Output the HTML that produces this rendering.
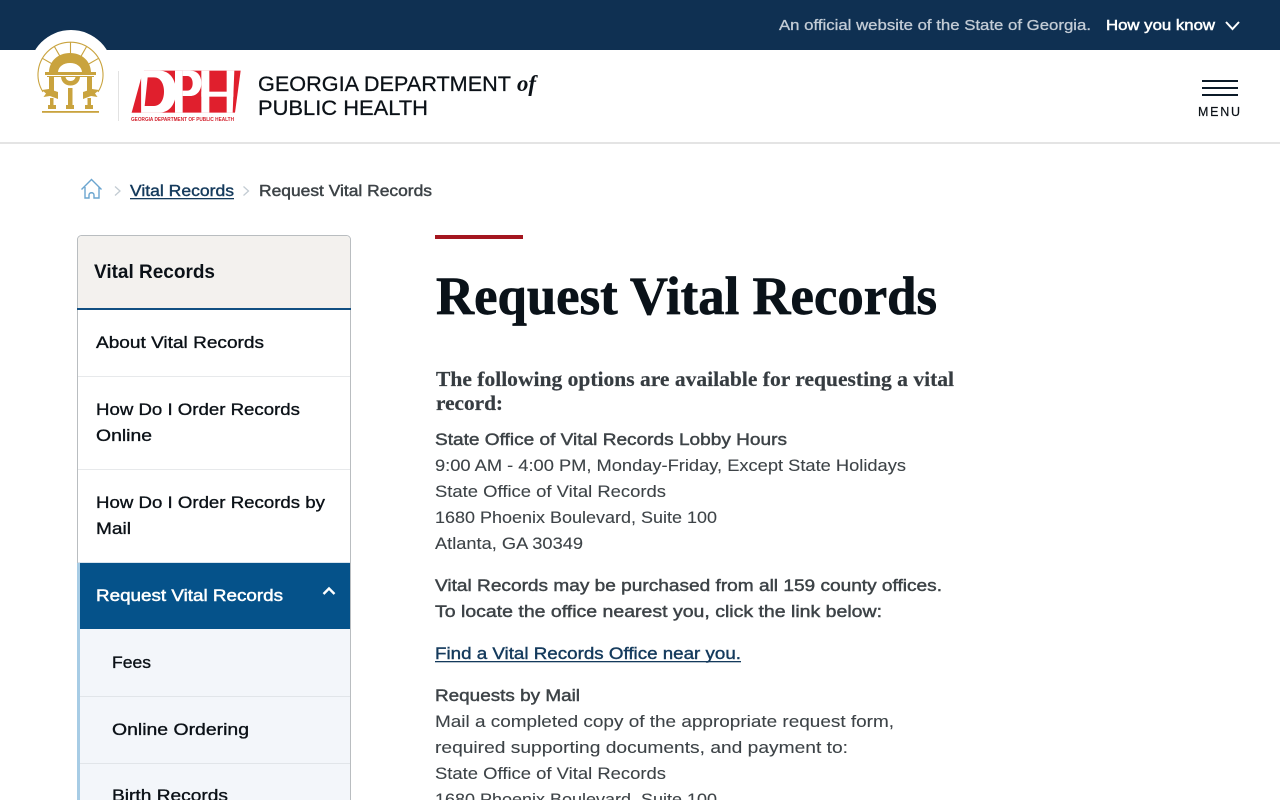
<!DOCTYPE html>
<html lang="en">
<head>
<meta charset="utf-8">
<title>Request Vital Records</title>
<style>
html,body{margin:0;padding:0;background:#fff;width:1280px;height:800px;overflow:hidden}
svg{display:block;position:absolute;left:0;top:0}
text{font-family:"Liberation Sans",sans-serif;font-size:17px;fill:#3d4347}
.r{stroke:#3d4347;stroke-width:.1}
.m{stroke:#3d4347;stroke-width:.45}
.n{fill:#0b1117;stroke:#0b1117;stroke-width:.35}
.f{font-family:"Liberation Serif",serif;font-weight:700}
</style>
</head>
<body>
<svg width="1280" height="800" viewBox="0 0 1280 800" xmlns="http://www.w3.org/2000/svg">
<!-- top bar -->
<rect width="1280" height="50" fill="#0f3052"/>
<rect y="50" width="1280" height="92" fill="#fff"/>
<rect y="142" width="1280" height="2" fill="#e4e4e4"/>
<text x="779" y="30" textLength="312" lengthAdjust="spacingAndGlyphs" style="font-size:15px;fill:#c3ccd6;stroke:#c3ccd6;stroke-width:.3">An official website of the State of Georgia.</text>
<text x="1106" y="30" textLength="109" lengthAdjust="spacingAndGlyphs" style="font-size:15px;fill:#fff;stroke:#fff;stroke-width:.5">How you know</text>
<path d="M1226 22L1232.500 29L1239 22" fill="none" stroke="#fff" stroke-width="2"/>

<!-- seal -->
<circle cx="71" cy="72" r="42" fill="#fff"/>
<g fill="#c9a33e" stroke="none">
<path d="M43 92A32.500 32.500 0 1 1 98 92" fill="none" stroke="#c9a33e" stroke-width="1.100"/>
<path d="M70.500 53V42M81 56.300L86.700 46.400M60 56.300L54.300 46.400M88.700 64L98.600 58.300M52.300 64L42.400 58.300" fill="none" stroke="#c9a33e" stroke-width="1.100"/>
<path d="M49 72C49.500 60.500 58.500 53 70 53C81.500 53 90.500 60.500 91 72H82C81.500 66.500 76.500 63 70 63C63.500 63 58.500 66.500 58 72Z"/>
<rect x="45" y="72" width="51" height="3"/>
<rect x="47" y="76" width="47" height="1"/>
<path d="M61 77H80C79.500 82 76 85.500 70.500 85.500C65 85.500 61.500 82 61 77ZM65.500 77C66 79.500 68 81 70.500 81C73 81 75 79.500 75.500 77Z" fill-rule="evenodd"/>
<rect x="49" y="77" width="5" height="15"/><rect x="87" y="77" width="5" height="15"/>
<rect x="68" y="88" width="4.500" height="17"/>
<rect x="50" y="98" width="3.500" height="7"/><rect x="87.500" y="98" width="3.500" height="7"/>
<path d="M42 90L49 89L58 92V99L50 96L43.500 97L46 93.500Z"/><path d="M99 90L92 89L83 92V99L91 96L97.500 97L95 93.500Z"/>
<rect x="48" y="105" width="8" height="4"/><rect x="66" y="105" width="8" height="4"/><rect x="85" y="105" width="8" height="4"/>
<rect x="42" y="111" width="57" height="1.800"/>
</g>
<rect x="118" y="71" width="1" height="50" fill="#e2e2e2"/>

<!-- DPH logo -->
<g transform="translate(0 20) scale(.33333)">
<path d="M395 278L432 152H722L705 278Z" fill="#e01f2d"/>
<path d="M425 152H478C510 152 528 180 528 215C528 250 510 278 478 278H425Z" fill="#fff"/>
<path d="M395 278L425 278V170L432 152H400Z" fill="#fff"/>
<path d="M395 278L423 176V278Z" fill="#e01f2d"/>
<path d="M443 172H462C482 172 492 192 492 215C492 238 482 258 462 258H434Z" fill="#e01f2d"/>
<rect x="525" y="152" width="23" height="126" fill="#fff"/>
<path d="M548 152H570C595 152 604 170 604 190C604 212 590 228 570 228H548Z" fill="#fff"/>
<path d="M548 168H562C572 168 578 178 578 190C578 202 572 212 562 212H548Z" fill="#e01f2d"/>
<rect x="604" y="152" width="24" height="126" fill="#fff"/>
<path d="M680 152H703L698 278H680Z" fill="#fff"/>
<rect x="604" y="215" width="96" height="15" fill="#fff"/>
</g>
<text x="131" y="121" textLength="103" lengthAdjust="spacingAndGlyphs" style="font-size:5.500px;font-weight:700;fill:#d3222e">GEORGIA DEPARTMENT OF PUBLIC HEALTH</text>

<!-- site name -->
<text x="258" y="91" textLength="253" lengthAdjust="spacingAndGlyphs" style="font-size:21px;fill:#0b1117;stroke:#0b1117;stroke-width:.25">GEORGIA DEPARTMENT</text>
<text x="517" y="91" textLength="19" lengthAdjust="spacingAndGlyphs" style="font-family:'Liberation Serif',serif;font-style:italic;font-weight:700;font-size:23px;fill:#0b1117">of</text>
<text x="258" y="115" textLength="170" lengthAdjust="spacingAndGlyphs" style="font-size:21px;fill:#0b1117;stroke:#0b1117;stroke-width:.25">PUBLIC HEALTH</text>

<!-- menu -->
<rect x="1202" y="80" width="36" height="2" fill="#0b1a28"/>
<rect x="1202" y="87" width="36" height="2" fill="#0b1a28"/>
<rect x="1202" y="94" width="36" height="2" fill="#0b1a28"/>
<text x="1198" y="116" textLength="42" lengthAdjust="spacing" style="font-size:12.500px;fill:#0b1117;stroke:#0b1117;stroke-width:.2">MENU</text>

<!-- breadcrumb -->
<path d="M81.500 189.500L91.500 179.500L101.500 189.500M85 187V198H89V195C89 192 94 192 94 195V198H99V187" fill="none" stroke="#6ba5cf" stroke-width="1.400"/>
<path d="M115 186.500L120 191L115 195.500" fill="none" stroke="#c3ccd3" stroke-width="1.300"/>
<text x="130" y="196" textLength="104" lengthAdjust="spacingAndGlyphs" style="font-size:16px;fill:#143a5c;stroke:#143a5c;stroke-width:.4">Vital Records</text>
<rect x="130" y="198" width="104" height="1.300" fill="#143a5c"/>
<path d="M243.500 186.500L248.500 191L243.500 195.500" fill="none" stroke="#c3ccd3" stroke-width="1.300"/>
<text class="m" x="259" y="196" textLength="173" lengthAdjust="spacingAndGlyphs" style="font-size:16px">Request Vital Records</text>

<!-- sidebar -->
<rect x="77.500" y="235.500" width="273" height="600" rx="4" fill="#fff" stroke="#b9bdc0"/>
<path d="M78 309V240A4 4 0 0 1 82 236H346A4 4 0 0 1 350 240V309Z" fill="#f3f1ee"/>
<rect x="77" y="308" width="274" height="2" fill="#114f82"/>
<text x="94" y="278" textLength="121" lengthAdjust="spacingAndGlyphs" style="font-size:19px;font-weight:700;fill:#0b1117">Vital Records</text>
<text class="n" x="96" y="348" textLength="168" lengthAdjust="spacingAndGlyphs">About Vital Records</text>
<rect x="78" y="376" width="272" height="1" fill="#e7e9eb"/>
<text class="n" x="96" y="415" textLength="204" lengthAdjust="spacingAndGlyphs">How Do I Order Records</text>
<text class="n" x="96" y="441" textLength="56" lengthAdjust="spacingAndGlyphs">Online</text>
<rect x="78" y="469" width="272" height="1" fill="#e7e9eb"/>
<text class="n" x="96" y="508" textLength="229" lengthAdjust="spacingAndGlyphs">How Do I Order Records by</text>
<text class="n" x="96" y="534" textLength="35" lengthAdjust="spacingAndGlyphs">Mail</text>
<rect x="78" y="562" width="272" height="1" fill="#d8e4ee"/>
<rect x="80" y="563" width="270" height="66" fill="#05528a"/>
<rect x="80" y="629" width="270" height="171" fill="#f3f6fa"/>
<rect x="77" y="563" width="3" height="237" fill="#a7cce5"/>
<text x="96" y="601" textLength="187" lengthAdjust="spacingAndGlyphs" style="fill:#fff;stroke:#fff;stroke-width:.5">Request Vital Records</text>
<path d="M323.500 594L329 588.500L334.500 594" fill="none" stroke="#fff" stroke-width="2.400"/>
<text class="n" x="112" y="668" textLength="39" lengthAdjust="spacingAndGlyphs">Fees</text>
<rect x="80" y="696" width="270" height="1" fill="#e1e5e9"/>
<text class="n" x="112" y="735" textLength="137" lengthAdjust="spacingAndGlyphs">Online Ordering</text>
<rect x="80" y="763" width="270" height="1" fill="#e1e5e9"/>
<text class="n" x="112" y="801" textLength="116" lengthAdjust="spacingAndGlyphs">Birth Records</text>

<!-- main -->
<rect x="435" y="235" width="88" height="4" fill="#a4161f"/>
<text class="f" x="436" y="314" textLength="501" lengthAdjust="spacingAndGlyphs" style="font-size:54px;fill:#0a1219;stroke:#0a1219;stroke-width:.7">Request Vital Records</text>
<text class="f" x="436" y="386" textLength="518" lengthAdjust="spacingAndGlyphs" style="font-size:21px;fill:#363c41;stroke:#363c41;stroke-width:.2">The following options are available for requesting a vital</text>
<text class="f" x="436" y="410" textLength="67" lengthAdjust="spacingAndGlyphs" style="font-size:21px;fill:#363c41;stroke:#363c41;stroke-width:.2">record:</text>

<text class="m" x="435" y="445" textLength="352" lengthAdjust="spacingAndGlyphs">State Office of Vital Records Lobby Hours</text>
<text class="r" x="435" y="471" textLength="471" lengthAdjust="spacingAndGlyphs">9:00 AM - 4:00 PM, Monday-Friday, Except State Holidays</text>
<text class="r" x="435" y="497" textLength="231" lengthAdjust="spacingAndGlyphs">State Office of Vital Records</text>
<text class="r" x="435" y="523" textLength="282" lengthAdjust="spacingAndGlyphs">1680 Phoenix Boulevard, Suite 100</text>
<text class="r" x="435" y="549" textLength="148" lengthAdjust="spacingAndGlyphs">Atlanta, GA 30349</text>

<text class="m" x="435" y="591" textLength="507" lengthAdjust="spacingAndGlyphs">Vital Records may be purchased from all 159 county offices.</text>
<text class="m" x="435" y="617" textLength="447" lengthAdjust="spacingAndGlyphs">To locate the office nearest you, click the link below:</text>

<text x="435" y="659" textLength="306" lengthAdjust="spacingAndGlyphs" style="fill:#143a5c;stroke:#143a5c;stroke-width:.4">Find a Vital Records Office near you.</text>
<rect x="435" y="661" width="306" height="1.300" fill="#143a5c"/>

<text class="m" x="435" y="701" textLength="145" lengthAdjust="spacingAndGlyphs">Requests by Mail</text>
<text class="r" x="435" y="727" textLength="459" lengthAdjust="spacingAndGlyphs">Mail a completed copy of the appropriate request form,</text>
<text class="r" x="435" y="753" textLength="413" lengthAdjust="spacingAndGlyphs">required supporting documents, and payment to:</text>
<text class="r" x="435" y="779" textLength="231" lengthAdjust="spacingAndGlyphs">State Office of Vital Records</text>
<text class="r" x="435" y="805" textLength="282" lengthAdjust="spacingAndGlyphs">1680 Phoenix Boulevard, Suite 100</text>
</svg>
</body>
</html>
